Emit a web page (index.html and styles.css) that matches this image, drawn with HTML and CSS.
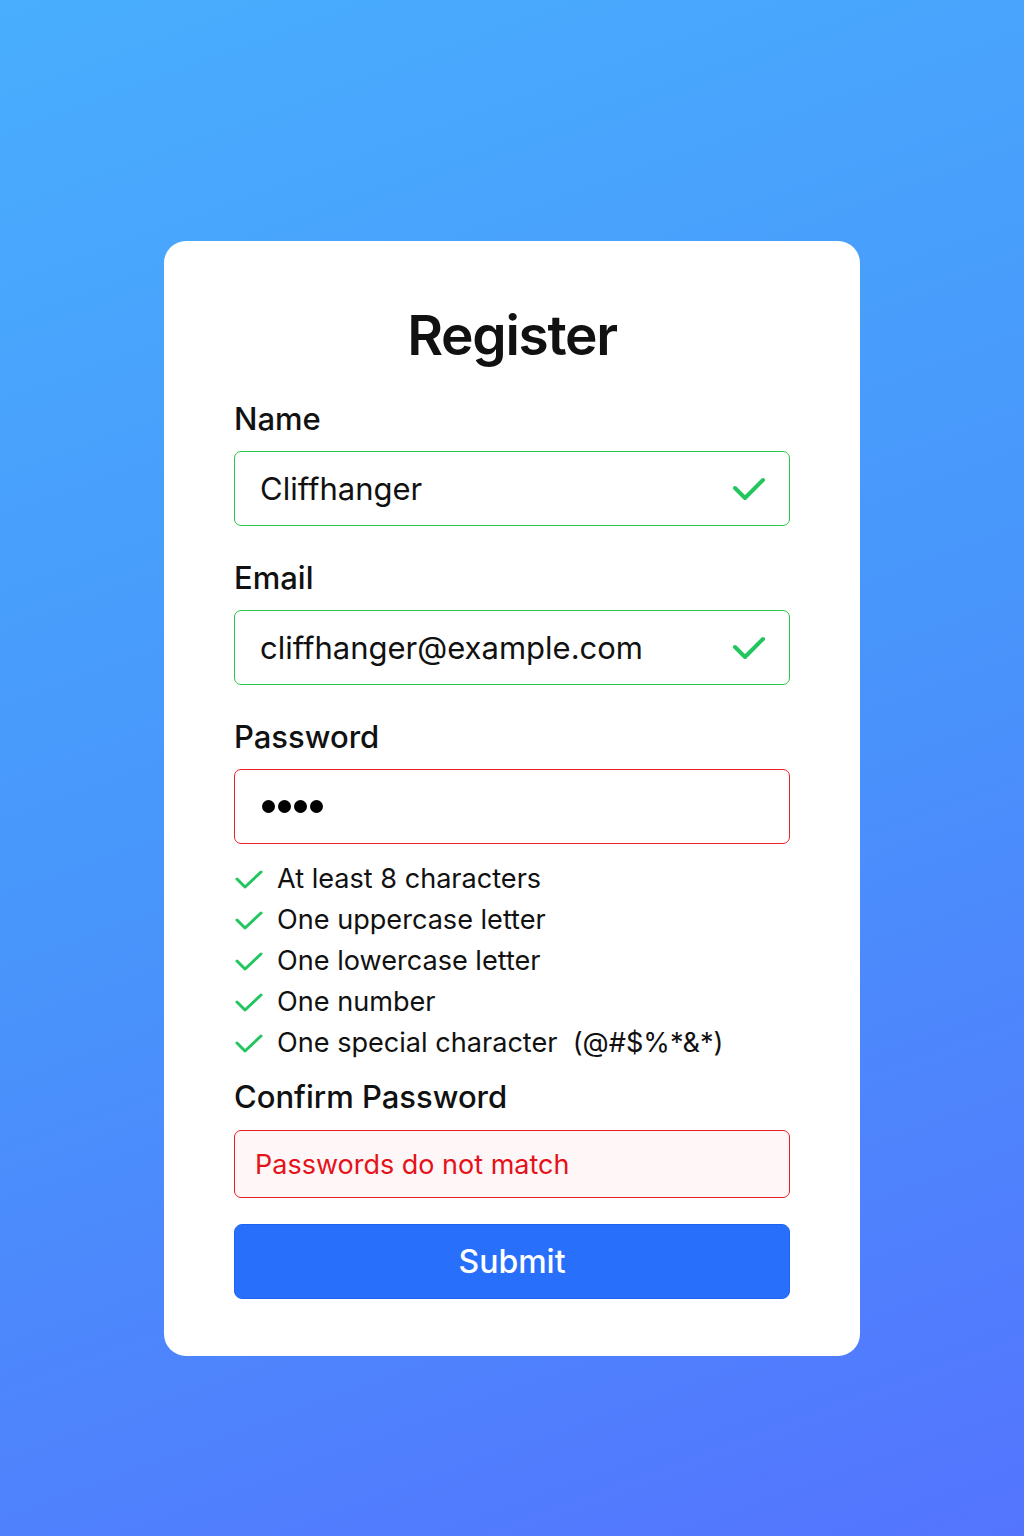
FILE: index.html
```html
<!DOCTYPE html>
<html lang="en">
<head>
<meta charset="utf-8">
<title>Register</title>
<link rel="stylesheet" href="styles.css">
</head>
<body>
<main class="page">
  <form class="card">
    <h1 class="title">Register</h1>

    <div class="field">
      <label class="label">Name</label>
      <div class="input input-valid">
        <span class="value">Cliffhanger</span>
        <svg class="ok" viewBox="0 0 32 24" width="32" height="24"><path d="M2 11 L12 21 L30 3" fill="none" stroke="#22c55e" stroke-width="4" stroke-linecap="round" stroke-linejoin="round"/></svg>
      </div>
    </div>

    <div class="field">
      <label class="label">Email</label>
      <div class="input input-valid">
        <span class="value">cliffhanger@example.com</span>
        <svg class="ok" viewBox="0 0 32 24" width="32" height="24"><path d="M2 11 L12 21 L30 3" fill="none" stroke="#22c55e" stroke-width="4" stroke-linecap="round" stroke-linejoin="round"/></svg>
      </div>
    </div>

    <div class="field field-pass">
      <label class="label">Password</label>
      <div class="input input-error">
        <span class="dots"><i></i><i></i><i></i><i></i></span>
      </div>
    </div>

    <ul class="rules">
      <li><svg viewBox="0 0 28 20" width="28" height="20"><path d="M2 9 L10 17 L26 2" fill="none" stroke="#22c55e" stroke-width="3" stroke-linecap="round" stroke-linejoin="round"/></svg>At least 8 characters</li>
      <li><svg viewBox="0 0 28 20" width="28" height="20"><path d="M2 9 L10 17 L26 2" fill="none" stroke="#22c55e" stroke-width="3" stroke-linecap="round" stroke-linejoin="round"/></svg>One uppercase letter</li>
      <li><svg viewBox="0 0 28 20" width="28" height="20"><path d="M2 9 L10 17 L26 2" fill="none" stroke="#22c55e" stroke-width="3" stroke-linecap="round" stroke-linejoin="round"/></svg>One lowercase letter</li>
      <li><svg viewBox="0 0 28 20" width="28" height="20"><path d="M2 9 L10 17 L26 2" fill="none" stroke="#22c55e" stroke-width="3" stroke-linecap="round" stroke-linejoin="round"/></svg>One number</li>
      <li><svg viewBox="0 0 28 20" width="28" height="20"><path d="M2 9 L10 17 L26 2" fill="none" stroke="#22c55e" stroke-width="3" stroke-linecap="round" stroke-linejoin="round"/></svg>One special character&nbsp; (@#$%*&amp;*)</li>
    </ul>

    <div class="field field-confirm">
      <label class="label">Confirm Password</label>
      <div class="input input-mismatch">
        <span class="error-text">Passwords do not match</span>
      </div>
    </div>

    <button type="button" class="submit">Submit</button>
  </form>
</main>
</body>
</html>
```

FILE: styles.css
```css
* { box-sizing: border-box; }

html, body {
  margin: 0;
  padding: 0;
}

body {
  width: 1024px;
  min-height: 1536px;
  font-family: Inter, "Noto Sans", "Liberation Sans", sans-serif;
  color: #111;
  background: linear-gradient(160deg, #49aefd 0%, #4895fb 50%, #5474fe 100%);
}

.page {
  display: flex;
  justify-content: center;
  padding-top: 241px;
}

.card {
  width: 696px;
  background: #fff;
  border-radius: 22px;
  padding: 60px 70px 57px;
  display: flex;
  flex-direction: column;
}

.title {
  margin: 0 0 32px;
  font-size: 55px;
  line-height: 68px;
  font-weight: 600;
  text-align: center;
  letter-spacing: -1.3px;
}

.field {
  display: flex;
  flex-direction: column;
  gap: 14px;
  margin-bottom: 34px;
}

.field-pass { margin-bottom: 14px; }

.label {
  font-size: 31px;
  line-height: 36px;
  font-weight: 500;
  color: #111;
}

.input {
  height: 75px;
  border-radius: 7px;
  border: 1.5px solid #22c55e;
  display: flex;
  align-items: center;
  justify-content: space-between;
  padding: 0 24px 0 25px;
  background: #fff;
}

.input-valid { border-color: #27c64a; }

.input-error { border-color: #ec2029; }

.value {
  font-size: 31px;
  color: #111;
}

.ok { flex: none; }

.dots {
  display: flex;
  gap: 3px;
  padding-left: 2px;
}

.dots i {
  display: block;
  width: 13px;
  height: 13px;
  border-radius: 50%;
  background: #000;
}

.rules {
  list-style: none;
  margin: 0 0 16px;
  padding: 0;
}

.rules li {
  display: flex;
  align-items: center;
  gap: 14px;
  font-size: 27.1px;
  line-height: 41px;
  color: #111;
}

.rules svg { flex: none; margin-left: 1px; margin-top: 2px; }

.field-confirm { margin-bottom: 26px; }

.input-mismatch {
  height: 68px;
  margin-top: 1px;
  border-color: #ec1c24;
  background: #fff6f8;
  padding-left: 20px;
}

.error-text {
  font-size: 27px;
  color: #e5121a;
}

.submit {
  height: 75px;
  border: 1px solid #1f63f0;
  border-radius: 8px;
  background: #2870fb;
  color: #fff;
  font-family: Inter, "Noto Sans", "Liberation Sans", sans-serif;
  font-size: 32px;
  font-weight: 500;
  cursor: pointer;
}
```
